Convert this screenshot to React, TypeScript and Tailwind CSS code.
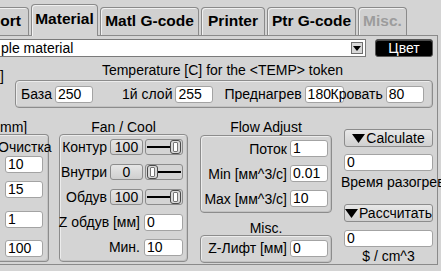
import React from 'react';

const Field = ({ value, className = '' }: { value: string; className?: string }) => (
    <div
        className={`h-[17px] shrink-0 overflow-hidden whitespace-nowrap rounded-[3px] border border-[#a3a3a3] bg-white pl-[2px] leading-[15px] ${className}`}
    >
        {value}
    </div>
);

const Box = ({ className = '', children }: { className?: string; children?: React.ReactNode }) => (
    <div
        className={`rounded-[4px] border border-[#8c8c8c] shadow-[inset_1px_1px_0_#ececec,inset_-1px_-1px_0_#c2c2c2] ${className}`}
    >
        {children}
    </div>
);

const Thumb = () => (
    <div className="flex h-[14px] w-[11px] shrink-0 items-center justify-center rounded-[3px] border border-[#4a4a4a] bg-[#d9d9d9]">
        <div className="h-[10px] w-[5px] rounded-[1px] border border-[#777] bg-white" />
    </div>
);

const Slider = ({ full }: { full: boolean }) => (
    <div className="ml-[2px] flex h-[16px] w-[38px] shrink-0 items-center rounded-[3px] border border-[#8c8c8c] px-[1px]">
        {full ? (
            <>
                <div className="h-[2px] flex-1 bg-black" />
                <Thumb />
            </>
        ) : (
            <>
                <Thumb />
                <div className="h-[2px] flex-1 bg-black" />
            </>
        )}
    </div>
);

const FanRow = ({ label, value, full }: { label: string; value: string; full: boolean }) => (
    <div className="flex h-[16px] items-center justify-end">
        <span className="mr-[3px] leading-[16px] whitespace-nowrap">{label}</span>
        <div className="flex h-[16px] w-[33px] shrink-0 items-center justify-center rounded-[3px] border border-[#8c8c8c] bg-gradient-to-b from-[#e6e6e6] to-[#cfcfcf] leading-[14px]">
            {value}
        </div>
        <Slider full={full} />
    </div>
);

const Arrow = () => (
    <svg width="13" height="9" viewBox="0 0 13 9" className="shrink-0">
        <polygon points="0,0 13,0 6.5,9" fill="black" />
    </svg>
);

const tabBase =
    'flex shrink-0 rounded-t-[4px] border border-b-0 border-[#8a8a8a] text-[15.5px] font-bold leading-[18px] whitespace-nowrap shadow-[inset_1px_1px_0_#f0f0f0]';
const tabIdle = `${tabBase} h-[28px] pt-[4px] bg-[#d0d0d0]`;

export default function App() {
    return (
        <div className="h-[271px] w-[441px] overflow-hidden bg-[#d4d4d4] font-['Liberation_Sans',Arial,sans-serif] text-[14px] text-black">
            {/* tabs */}
            <div className="flex h-[36px] w-[438px] items-end gap-[2px] border-b border-[#8a8a8a]">
                <div className={`${tabIdle} ml-[-11px] w-[40px] justify-end pr-[7px]`}>port</div>
                <div className={`${tabBase} relative z-10 mb-[-1px] h-[32px] w-[67px] justify-center bg-[#d4d4d4] pt-[5px]`}>
                    Material
                </div>
                <div className={`${tabIdle} w-[99px] justify-center`}>Matl G-code</div>
                <div className={`${tabIdle} w-[64px] justify-center`}>Printer</div>
                <div className={`${tabIdle} w-[89px] justify-center`}>Ptr G-code</div>
                <div className={`${tabIdle} w-[49px] justify-center text-[#9c9c9c]`}>Misc.</div>
            </div>

            {/* panel */}
            <div className="h-[229px] w-[438px] border-r border-b border-[#8a8a8a]">
                <div className="flex h-[23px] items-start pt-[3px]">
                    <div className="flex h-[18px] w-[366px] items-center justify-between border border-l-0 border-[#7a7a7a] bg-white">
                        <span className="pl-[1px] leading-[16px]">ple material</span>
                        <div className="mr-[2px] flex h-[12px] w-[12px] items-center justify-center border border-[#6e6e6e] bg-[#d8d8d8]">
                            <svg width="8" height="5" viewBox="0 0 8 5">
                                <polygon points="0,0 8,0 4,5" fill="black" />
                            </svg>
                        </div>
                    </div>
                    <div className="ml-[9px] flex h-[18px] w-[58px] items-center justify-center rounded-[3px] border border-[#555] bg-black leading-[16px] text-white shadow-[inset_0_1px_0_#4a4a4a]">
                        Цвет
                    </div>
                </div>

                <div className="flex h-[21px] items-start">
                    <span className="mt-[9px] leading-[16px]">]</span>
                    <span className="mt-[3px] ml-[98px] leading-[16px] whitespace-nowrap">
                        Temperature [C] for the &lt;TEMP&gt; token
                    </span>
                </div>

                <Box className="ml-[15px] flex h-[28px] w-[418px] items-center pl-[5px]">
                    <span className="leading-[16px]">База</span>
                    <Field value="250" className="ml-[3px] w-[38px]" />
                    <span className="ml-[29px] leading-[16px] whitespace-nowrap">1й слой</span>
                    <Field value="255" className="ml-[3px] w-[38px]" />
                    <span className="ml-[11px] leading-[16px]">Преднагрев</span>
                    <Field value="180" className="ml-[3px] w-[39px]" />
                    <span className="relative z-10 ml-[-13px] leading-[16px]">Кровать</span>
                    <Field value="80" className="ml-[3px] w-[38px]" />
                </Box>

                <div className="flex h-[156px] items-start">
                    {/* left partial column */}
                    <div className="flex w-[49px] shrink-0 flex-col">
                        <div className="h-[26px] pt-[11px] leading-[16px]">mm]</div>
                        <div className="h-[128px] rounded-r-[4px] border border-l-0 border-[#8c8c8c] shadow-[inset_0_1px_0_#ececec,inset_-1px_-1px_0_#c2c2c2]">
                            <div className="ml-[-2px] mt-[4px] leading-[16px] whitespace-nowrap">Очистка</div>
                            <Field value="10" className="ml-[5px] mt-[1px] w-[38px]" />
                            <Field value="15" className="ml-[5px] mt-[8px] w-[38px]" />
                            <Field value="1" className="ml-[5px] mt-[13px] w-[38px]" />
                            <Field value="100" className="ml-[5px] mt-[12px] w-[38px]" />
                        </div>
                    </div>

                    {/* fan / cool */}
                    <div className="ml-[10px] flex w-[129px] shrink-0 flex-col">
                        <div className="h-[26px] pt-[11px] text-center leading-[16px]">Fan / Cool</div>
                        <Box className="flex h-[128px] flex-col gap-[9px] pt-[4px] pr-[4px]">
                            <FanRow label="Контур" value="100" full />
                            <FanRow label="Внутри" value="0" full={false} />
                            <FanRow label="Обдув" value="100" full />
                            <div className="flex h-[16px] items-center justify-end">
                                <span className="mr-[4px] leading-[16px] whitespace-nowrap">Z обдув [мм]</span>
                                <Field value="0" className="w-[39px]" />
                            </div>
                            <div className="flex h-[16px] items-center justify-end">
                                <span className="mr-[4px] leading-[16px]">Мин.</span>
                                <Field value="10" className="w-[39px]" />
                            </div>
                        </Box>
                    </div>

                    {/* flow adjust + misc */}
                    <div className="ml-[12px] flex w-[132px] shrink-0 flex-col">
                        <div className="h-[27px] pt-[11px] text-center leading-[16px]">Flow Adjust</div>
                        <Box className="flex h-[78px] flex-col gap-[8px] pt-[4px] pr-[3px]">
                            <div className="flex h-[17px] items-center justify-end">
                                <span className="mr-[3px] leading-[16px]">Поток</span>
                                <Field value="1" className="w-[38px]" />
                            </div>
                            <div className="flex h-[17px] items-center justify-end">
                                <span className="mr-[3px] leading-[16px] whitespace-nowrap">Min [мм^3/с]</span>
                                <Field value="0.01" className="w-[38px]" />
                            </div>
                            <div className="flex h-[17px] items-center justify-end">
                                <span className="mr-[3px] leading-[16px] whitespace-nowrap">Max [мм^3/с]</span>
                                <Field value="10" className="w-[38px]" />
                            </div>
                        </Box>
                        <div className="h-[22px] pt-[7px] text-center leading-[16px]">Misc.</div>
                        <Box className="flex h-[28px] items-start justify-end pt-[4px] pr-[3px]">
                            <span className="mr-[3px] leading-[16px] whitespace-nowrap">Z-Лифт [мм]</span>
                            <Field value="0" className="w-[38px]" />
                        </Box>
                    </div>

                    {/* right column */}
                    <div className="ml-[12px] flex w-[89px] shrink-0 flex-col">
                        <div className="mt-[21px] flex h-[18px] items-center justify-center gap-[1px] rounded-[3px] border border-[#8c8c8c] bg-gradient-to-b from-[#e8e8e8] to-[#d0d0d0] leading-[16px]">
                            <Arrow />
                            <span>Calculate</span>
                        </div>
                        <Field value="0" className="mt-[7px] w-[89px]" />
                        <div className="mt-[3px] ml-[-3px] leading-[16px] whitespace-nowrap">Время разогрева</div>
                        <div className="mt-[14px] flex h-[18px] items-center justify-center gap-[1px] overflow-visible whitespace-nowrap rounded-[3px] border border-[#8c8c8c] bg-gradient-to-b from-[#e8e8e8] to-[#d0d0d0] leading-[16px]">
                            <Arrow />
                            <span>Рассчитать</span>
                        </div>
                        <Field value="0" className="mt-[8px] w-[89px]" />
                        <div className="mt-[1px] text-center leading-[16px]">$ / cm^3</div>
                    </div>
                </div>
            </div>
        </div>
    );
}
